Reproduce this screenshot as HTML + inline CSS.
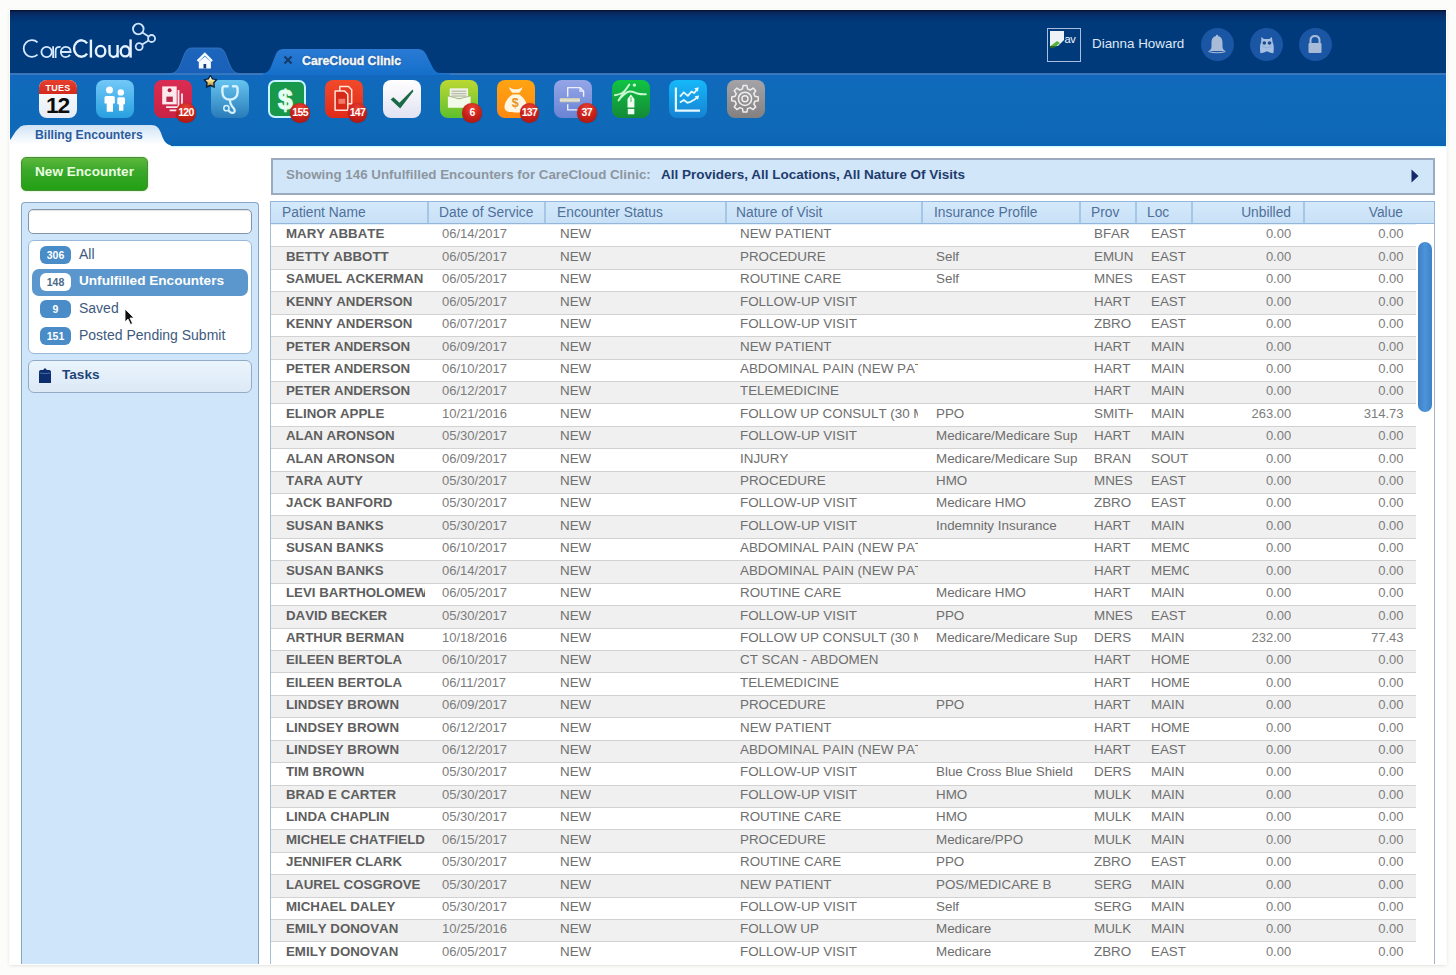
<!DOCTYPE html>
<html><head><meta charset="utf-8">
<style>
*{box-sizing:border-box}
html,body{margin:0;padding:0}
body{width:1456px;height:975px;position:relative;overflow:hidden;background:#fcfcfb;font-family:"Liberation Sans",sans-serif}
.abs{position:absolute}
#app{position:absolute;left:10px;top:10px;width:1436px;height:954px;background:#fff;box-shadow:0 0 0 1px rgba(255,255,255,.9),0 1px 4px rgba(0,0,0,.16)}
#navy{position:absolute;left:10px;top:10px;width:1436px;height:63px;background:linear-gradient(#040e28 0,#0a2458 2px,#03306e 6px,#013a7b 13px,#013a7b 100%)}
#hl{position:absolute;left:10px;top:72.5px;width:1436px;height:2px;background:linear-gradient(#2a62a8,#4a84c4 50%,#2a70b8)}
#band{position:absolute;left:10px;top:74.5px;width:1436px;height:71px;background:linear-gradient(#1268be 0,#0f6aba 20%,#0f69b8 80%,#0c64b4 100%)}
#glow{position:absolute;left:10px;top:145.5px;width:1436px;height:2.5px;background:linear-gradient(#c0f6ff,#ffffff)}
.ic{position:absolute;overflow:visible}
.bd{position:absolute;width:19.5px;height:19.5px;border-radius:50%;background:radial-gradient(circle at 50% 28%,#ea4434 0,#c8201a 50%,#a01410 100%);color:#fff;font-weight:bold;font-size:10.5px;line-height:19.5px;text-align:center;letter-spacing:-0.6px;box-shadow:0 0 1px rgba(0,0,0,.4)}
#logo{position:absolute;left:22px;top:30px;color:#eaf4ff;font-size:25px;letter-spacing:-1.2px;line-height:32px}
#logo b{font-weight:bold}
#user{position:absolute;left:1092px;top:35.2px;color:#dde8f5;font-size:13.4px;line-height:18px}
.circ{position:absolute;width:33px;height:33px;border-radius:50%;background:#1a56a4}
#avatar{position:absolute;left:1047px;top:28px;width:34px;height:34px;border:1.5px solid #a8bedc;background:#013a7b}
#btn{position:absolute;left:21px;top:157px;width:127px;height:34px;border-radius:5px;background:linear-gradient(#5cb83c 0,#3aa82a 40%,#22a014 100%);border:1px solid #4a8a3a;box-shadow:0 0 2px #a0f080;color:#eaffe0;font-weight:bold;font-size:13.6px;line-height:28px;text-align:center}
#lp{position:absolute;left:21px;top:202px;width:238px;height:762px;background:#cfe5f9;border:1.5px solid #86a6c6;border-bottom:none;border-radius:4px 4px 0 0}
#srch{position:absolute;left:27.5px;top:209px;width:224.5px;height:25px;background:#fff;border:1.6px solid #8494a6;border-radius:5px;box-shadow:inset 0 1px 1px rgba(0,0,0,.12)}
#lst{position:absolute;left:27.5px;top:240px;width:224.5px;height:113.5px;background:#fff;border:1.5px solid #9ab8d8;border-radius:6px}
#tasks{position:absolute;left:27.5px;top:360px;width:224.5px;height:32.5px;background:linear-gradient(#eaf4fc,#dce9f6);border:1.5px solid #92acc6;border-radius:6px}
.cnt{position:absolute;left:40px;width:31px;height:18px;border-radius:6px;background:#4a8cc8;color:#fff;font-size:10.5px;font-weight:bold;text-align:center;line-height:18px}
.lit{position:absolute;left:79px;color:#3d5a7e;font-size:14px;line-height:18px}
#sel{position:absolute;left:32px;top:269px;width:216px;height:27px;border-radius:7px;background:#5b97cc}
#filt{position:absolute;left:270.5px;top:157.5px;width:1164.5px;height:37px;background:#d2e6f9;border:2px solid #9aabbf}
#tbl{position:absolute;left:270px;top:201px;width:1165px;height:763px;background:#fff;border-left:1.5px solid #a6bed6;border-right:1.5px solid #a2b4c6}
#thd{position:absolute;left:270px;top:200.8px;width:1165px;height:23.2px;background:linear-gradient(#d4e9fb,#c8e0f6);border:1.5px solid #94b6da}
.th{position:absolute;top:203px;color:#50709a;font-size:13.8px;line-height:20px;white-space:nowrap}
.dv{position:absolute;top:202px;width:2px;height:21px;background:#a6c6e6}
.rw{position:absolute;left:271px;width:1144.5px;height:22.42px;border-top:1px solid #d2d2d2;background:#fff}
.rw.g{background:#f0f0f0}
.td{position:absolute;top:-0.6px;line-height:20px;white-space:nowrap;overflow:hidden}
.nm{font-weight:bold;color:#5e5e5e;font-size:13.3px;font-kerning:none}
.dt{color:#7c7c7c;font-size:13px}
.tx{color:#6e6e6e;font-size:13.4px;font-kerning:none}
.ra{text-align:right}
#thumb{position:absolute;left:1418.3px;top:242px;width:13.6px;height:170px;border-radius:7px;background:linear-gradient(90deg,#3c80c8,#4e94d8 50%,#3c82ca)}
</style></head><body>
<div id="app"></div>
<div id="navy"></div>
<div id="hl"></div>
<div id="band"></div>
<div id="glow"></div>
<!-- tabs -->
<svg class="abs" style="left:160px;top:44px" width="290" height="31" viewBox="0 0 290 31">
  <defs>
   <linearGradient id="tabh" x1="0" y1="0" x2="0" y2="1"><stop offset="0" stop-color="#1e66bc"/><stop offset="1" stop-color="#1860b8"/></linearGradient>
   <linearGradient id="tabc" x1="0" y1="0" x2="0" y2="1"><stop offset="0" stop-color="#2a7ad4"/><stop offset="1" stop-color="#1470ca"/></linearGradient>
  </defs>
  <path d="M10 29.6 C16.5 29.6 19 24.5 22 16.5 C25 8.5 26.5 4 31.5 4 H58.5 C63.5 4 65 8.5 68 16.5 C71 24.5 73.5 29.6 80 29.6 Z" fill="url(#tabh)" stroke="#3a78c4" stroke-width="0.8"/>
  <path d="M102.5 29.6 C107 29 109.5 26.5 111 22.5 L115.5 11 C117 7 119.5 5 124 5 H257 C262 5 264.5 7 266.5 11 L272.5 23 C274.5 27 277 29.2 283 29.6 H290 V31 H102.5 Z" fill="url(#tabc)"/>
</svg>
<svg class="abs" style="left:195px;top:51px" width="20" height="20" viewBox="0 0 20 20"><path d="M3.8 10.8 L9.8 5.6 L15.9 10.8 V17.4 H3.8 Z" fill="#f4faff"/><path d="M2.6 10.2 L9.8 2.9 L17 10.2" fill="none" stroke="#f4faff" stroke-width="2.4"/><rect x="8.5" y="13" width="2.7" height="4.4" fill="#163c72"/></svg>
<svg class="abs" style="left:283px;top:55px" width="10" height="10" viewBox="0 0 10 10"><path d="M1.5 1.5 L8.5 8.5 M8.5 1.5 L1.5 8.5" stroke="#163a6c" stroke-width="2.2"/></svg>
<div class="abs" style="left:302px;top:52.5px;color:#f0f8ff;font-size:12.3px;font-weight:bold;line-height:16px;letter-spacing:0px;-webkit-text-stroke:0.45px #f0f8ff;text-shadow:0 0 1.5px #0a2a5a,0 0 1px #0a2a5a">CareCloud Clinic</div>
<!-- billing tab -->
<svg class="abs" style="left:10px;top:124px" width="165" height="24" viewBox="0 0 165 24">
  <defs><linearGradient id="tabb" x1="0" y1="0" x2="0" y2="1"><stop offset="0" stop-color="#cfe2f6"/><stop offset="0.85" stop-color="#ffffff"/></linearGradient></defs>
  <path d="M0 24 V16 C3 12 6 6 9 4 C11 1.8 13 1 20 1 H141 C147 1 149 4 151 9 C153 15 155 20 161 21.5 V24 Z" fill="url(#tabb)"/>
</svg>
<div class="abs" style="left:35px;top:127px;color:#2c5c9c;font-size:12.2px;font-weight:bold;line-height:16px">Billing Encounters</div>
<!-- logo -->
<svg class="abs" style="left:0;top:0" width="170" height="70" viewBox="0 0 170 70">
  <g fill="none" stroke="#d6eaff" stroke-width="1.8" stroke-linecap="butt">
    <path d="M37.55 42.33 A8.3 8.3 0 1 0 37.55 54.67"/>
    <ellipse cx="46.6" cy="52" rx="5.2" ry="5.1"/><path d="M53.1 46.2 V58"/>
    <path d="M55.6 58 V50.8 C55.6 47.6 57.4 46.6 60.6 46.8"/>
    <path d="M60.8 52 H70.6 C70.6 48.8 68.5 46.9 65.7 46.9 C62.9 46.9 60.8 49.2 60.8 52 C60.8 54.8 62.9 57.1 65.7 57.1 C67.6 57.1 69.2 56.2 70 54.8"/>
  </g>
  <g fill="none" stroke="#e6f2ff" stroke-width="2.4" stroke-linecap="butt">
    <path d="M87.1 43.4 A7.3 8.2 0 1 0 87.1 53.6"/>
    <path d="M90.9 39.6 V57.6"/>
    <ellipse cx="100.6" cy="51.2" rx="4.7" ry="5.3"/>
    <path d="M109.5 45 V52.2 A4.05 4.8 0 0 0 117.6 52.2 M117.6 45 V57.6"/>
    <ellipse cx="125.2" cy="51.3" rx="4.5" ry="5.1"/><path d="M130.6 39.4 V57.6"/>
  </g>
  <g fill="none" stroke="#cfe4ff" stroke-width="1.8">
    <circle cx="138.3" cy="29" r="5.3"/><circle cx="151.6" cy="38.5" r="3.5"/><circle cx="139.2" cy="46.6" r="3.5"/>
    <path d="M142.4 32.4 L148.6 36.4 M148.6 40.6 L142.2 44.6"/>
  </g>
</svg>
<!-- user -->
<div id="avatar"><svg width="31" height="31" viewBox="0 0 31 31" style="position:absolute;left:0;top:0"><path d="M2 2 H16 V11 L10 17 H2 Z" fill="#eef2f6"/><path d="M2.5 17 L9 12 L12 14 L8 17.5 Z" fill="#58b040"/><path d="M2 17 H8 L6 19 H2 Z" fill="#2a6a28"/><text x="16.5" y="13.5" font-family="Liberation Sans" font-size="11" fill="#f4f8ff" letter-spacing="-0.3">av</text></svg></div>
<div id="user">Dianna Howard</div>
<div class="circ" style="left:1200.7px;top:28.2px"></div>
<div class="circ" style="left:1250.2px;top:28.2px"></div>
<div class="circ" style="left:1298.6px;top:28.2px"></div>
<svg class="abs" style="left:1207px;top:34px" width="20" height="22" viewBox="0 0 20 22"><path d="M10 2 C6 2 4.5 5 4.5 9 V13 C4.5 15 3 16 2 17 H18 C17 16 15.5 15 15.5 13 V9 C15.5 5 14 2 10 2 Z" fill="#a8bcd8"/><path d="M1.5 17.5 Q10 20 18.5 17.5" fill="none" stroke="#a8bcd8" stroke-width="1.2"/><circle cx="10" cy="2" r="1.2" fill="#a8bcd8"/></svg>
<svg class="abs" style="left:1257px;top:34px" width="20" height="22" viewBox="0 0 20 22"><path d="M4.4 2.9 L7 5 H12.4 L14.9 2.9 L15.6 8 C17 11 17 15 16.4 19.2 L12.8 18.6 L9.9 17.2 L7 18.6 L3.4 19.2 C2.8 15 2.8 11 4.2 8 Z" fill="#a6c0e4"/><circle cx="7.3" cy="9" r="1.8" fill="#1c4a8a"/><circle cx="12.5" cy="9" r="1.8" fill="#1c4a8a"/><path d="M5 12.5 Q9.9 15 14.8 12.5" fill="none" stroke="#88a8d4" stroke-width="0.8"/></svg>
<svg class="abs" style="left:1306px;top:34px" width="18" height="22" viewBox="0 0 18 22"><path d="M4.5 9 V6.5 C4.5 3.5 6.5 2 9 2 C11.5 2 13.5 3.5 13.5 6.5 V9" fill="none" stroke="#a8bcd8" stroke-width="2"/><rect x="2.5" y="9" width="13" height="10" rx="1" fill="#a8bcd8"/></svg>
<!-- icons -->
<svg class="ic" style="left:38.6px;top:79.7px" width="38" height="38" viewBox="0 0 38 38"><defs><linearGradient id="gcal" x1="0" y1="0" x2="0" y2="1"><stop offset="0" stop-color="#ffffff"/><stop offset="1" stop-color="#e6ecf6"/></linearGradient></defs><defs><linearGradient id="gcalr" x1="0" y1="0" x2="0" y2="1"><stop offset="0" stop-color="#e8402e"/><stop offset="1" stop-color="#d22a1c"/></linearGradient></defs><rect x="0" y="0" width="38" height="38" rx="8" fill="url(#gcal)"/><path d="M0 14 V8 A8 8 0 0 1 8 0 H30 A8 8 0 0 1 38 8 V14 Z" fill="url(#gcalr)"/><text x="19" y="11.1" text-anchor="middle" font-family="Liberation Sans" font-weight="bold" font-size="9" letter-spacing="0.3" fill="#fff">TUES</text><text x="18.6" y="33" text-anchor="middle" font-family="Liberation Sans" font-weight="bold" font-size="22.8" fill="#0c0c0c" letter-spacing="-1.2">12</text></svg>
<svg class="ic" style="left:96.2px;top:79.7px" width="38" height="38" viewBox="0 0 38 38"><defs><linearGradient id="gppl" x1="0" y1="0" x2="0" y2="1"><stop offset="0" stop-color="#72c8f8"/><stop offset="1" stop-color="#28a0e0"/></linearGradient></defs><rect x="0" y="0" width="38" height="38" rx="8" fill="url(#gppl)"/><circle cx="13.5" cy="9.9" r="3.5" fill="#fff"/><path d="M8.5 17.5 Q8.5 15.9 10.1 15.9 H17.2 Q18.8 15.9 18.8 17.5 V23.5 H17 V31.8 H10.7 V23.5 H8.5 Z" fill="#fff"/><circle cx="24.8" cy="12.4" r="3.2" fill="#fff"/><path d="M21.3 18.8 Q21.3 17.3 22.8 17.3 H27.5 Q29 17.3 29 18.8 V24.3 H27.4 V30.8 H22.9 V24.3 H21.3 Z" fill="#fff"/></svg>
<svg class="ic" style="left:153.5px;top:79.7px" width="38" height="38" viewBox="0 0 38 38"><defs><linearGradient id="gred1" x1="0" y1="0" x2="0" y2="1"><stop offset="0" stop-color="#da2c52"/><stop offset="1" stop-color="#c82244"/></linearGradient></defs><rect x="0" y="0" width="38" height="38" rx="8" fill="url(#gred1)"/><rect x="8.2" y="6.4" width="14.5" height="18" fill="#fde8ee"/><circle cx="15.6" cy="10.3" r="2" fill="#a82040"/><rect x="12.4" y="16.6" width="6.4" height="5.3" fill="#b82848"/><path d="M24.5 9.9 V27.2 H12.1" fill="none" stroke="#fde8ee" stroke-width="1.8"/><path d="M28 13.4 V30.4 H15.6" fill="none" stroke="#fde8ee" stroke-width="1.8"/></svg><div class="bd" style="left:176.25px;top:103.45px">120</div>
<svg class="ic" style="left:210.8px;top:79.7px" width="38" height="38" viewBox="0 0 38 38"><defs><linearGradient id="gst" x1="0" y1="0" x2="0" y2="1"><stop offset="0" stop-color="#66c4f0"/><stop offset="1" stop-color="#2a7cb8"/></linearGradient></defs><rect x="0" y="0" width="38" height="38" rx="8" fill="url(#gst)"/><path d="M16.6 6.2 H13.6 C12.2 6.2 11.4 7.2 11.4 8.8 V12 C11.4 16.6 14.6 19.6 18.9 19.6 C23.2 19.6 26.6 16.6 26.6 12 V8.8 C26.6 7.2 25.8 6.2 24.4 6.2 H22" fill="none" stroke="#d6f2ff" stroke-width="2.4" stroke-linecap="round"/><path d="M18.9 19.6 C19 22.5 19.6 24.5 21 26.2 C22.6 28.2 24.4 29.6 23.6 31.6 C22.8 33.6 19.6 33.4 18 30.8" fill="none" stroke="#d6f2ff" stroke-width="2.2" stroke-linecap="round"/><circle cx="15.4" cy="28.2" r="2.6" fill="none" stroke="#d6f2ff" stroke-width="1.5"/></svg>
<svg class="ic" style="left:267.6px;top:79.7px" width="38" height="38" viewBox="0 0 38 38"><rect x="1" y="1" width="36" height="36" rx="6" fill="#18984a" stroke="#c8f4ff" stroke-width="2"/><text x="17.4" y="29" text-anchor="middle" font-family="Liberation Sans" font-weight="bold" font-size="28.5" fill="#e6fff0" stroke="#e6fff0" stroke-width="1.1" transform="translate(17.4 0) scale(0.92 1) translate(-17.4 0)">$</text></svg><div class="bd" style="left:290.35px;top:103.45px">155</div>
<svg class="ic" style="left:325px;top:79.7px" width="38" height="38" viewBox="0 0 38 38"><defs><linearGradient id="gred2" x1="0" y1="0" x2="0" y2="1"><stop offset="0" stop-color="#f24a2a"/><stop offset="1" stop-color="#e02a18"/></linearGradient></defs><rect x="0" y="0" width="38" height="38" rx="8" fill="url(#gred2)"/><path d="M14.8 6.5 H23.5 L26.7 9.7 V23.8 H14.8 Z" fill="#e83820" stroke="#ffe4dc" stroke-width="1.5" stroke-linejoin="round"/><path d="M10.1 10.9 H19.4 L22.8 14.3 V30.3 H10.1 Z" fill="#d82818" stroke="#ffe4dc" stroke-width="1.5" stroke-linejoin="round"/><rect x="13.4" y="18.8" width="6.8" height="5" fill="#f07a68"/></svg><div class="bd" style="left:347.75px;top:103.45px">147</div>
<svg class="ic" style="left:382.7px;top:79.7px" width="38" height="38" viewBox="0 0 38 38"><defs><linearGradient id="gchk" x1="0" y1="0" x2="0" y2="1"><stop offset="0" stop-color="#ffffff"/><stop offset="1" stop-color="#e2e2f2"/></linearGradient></defs><rect x="0" y="0" width="38" height="38" rx="8" fill="url(#gchk)"/><path d="M7.6 19.6 L10.4 17.2 L16.4 22.8 L29.6 9.6 L30.4 11.2 L17.2 28.4 Z" fill="#1a6a48"/></svg>
<svg class="ic" style="left:439.7px;top:79.7px" width="38" height="38" viewBox="0 0 38 38"><defs><linearGradient id="gml" x1="0" y1="0" x2="0" y2="1"><stop offset="0" stop-color="#bcd832"/><stop offset="1" stop-color="#5ec02e"/></linearGradient></defs><rect x="0" y="0" width="38" height="38" rx="8" fill="url(#gml)"/><rect x="9.7" y="8.3" width="18.4" height="10" fill="#eef2e4"/><rect x="11.5" y="10.6" width="14.8" height="1.3" fill="#b8bca8"/><rect x="11.5" y="13" width="14.8" height="1.3" fill="#b8bca8"/><rect x="11.5" y="15.4" width="14.8" height="1.3" fill="#b8bca8"/><path d="M7.9 15.9 L19.2 18.9 L30.6 15.9 V27.8 H7.9 Z" fill="#f4fae8"/><path d="M7.9 15.9 L19.2 18.9 L30.6 15.9" fill="none" stroke="#9aa880" stroke-width="0.8"/></svg><div class="bd" style="left:462.45px;top:103.45px">6</div>
<svg class="ic" style="left:497px;top:79.7px" width="38" height="38" viewBox="0 0 38 38"><defs><linearGradient id="gmb" x1="0" y1="0" x2="0" y2="1"><stop offset="0" stop-color="#ffa412"/><stop offset="1" stop-color="#ff8810"/></linearGradient></defs><rect x="0" y="0" width="38" height="38" rx="8" fill="url(#gmb)"/><path d="M11.9 7 C14 8.4 16.5 9.5 18.8 9.3 C21 9.5 23.6 8.4 25.6 7 C25 9.5 23.5 11.5 22 12.7 H15.5 C14 11.5 12.5 9.5 11.9 7 Z" fill="#fff6e4"/><path d="M15.4 14.4 H22.2 C27 17.5 30.4 23 30.1 27.5 C29.8 31 26.5 32.5 18.8 32.5 C11 32.5 7.6 31 7.5 27.5 C7.3 23 10.6 17.5 15.4 14.4 Z" fill="#fff6e4"/><text x="18.2" y="26.6" text-anchor="middle" font-family="Liberation Sans" font-weight="bold" font-size="12.5" fill="#e8901a">$</text></svg><div class="bd" style="left:519.75px;top:103.45px">137</div>
<svg class="ic" style="left:554.3px;top:79.7px" width="38" height="38" viewBox="0 0 38 38"><defs><linearGradient id="gsc" x1="0" y1="0" x2="0" y2="1"><stop offset="0" stop-color="#94a6e6"/><stop offset="1" stop-color="#6a84d4"/></linearGradient></defs><rect x="0" y="0" width="38" height="38" rx="8" fill="url(#gsc)"/><path d="M13.7 16.8 V7.6 H26 L29.6 11.2 V16.8 M29.6 24.2 V29.9 H13.7 V24.2" fill="none" stroke="#eef0ff" stroke-width="1.4" stroke-linejoin="round"/><path d="M26 7.6 V11.2 H29.6" fill="none" stroke="#eef0ff" stroke-width="1.2"/><rect x="5.8" y="18" width="20.2" height="4.3" rx="1" fill="#cfcdb8"/><rect x="5.8" y="19.6" width="20.2" height="1" fill="#f0f0e8"/></svg><div class="bd" style="left:577.05px;top:103.45px">37</div>
<svg class="ic" style="left:612px;top:79.7px" width="38" height="38" viewBox="0 0 38 38"><defs><linearGradient id="ggs" x1="0" y1="0" x2="0" y2="1"><stop offset="0" stop-color="#10c444"/><stop offset="1" stop-color="#148a36"/></linearGradient></defs><rect x="0" y="0" width="38" height="38" rx="8" fill="url(#ggs)"/><path d="M2.9 15.2 C6 14.8 8.5 14 10.5 12.8 C13 11 15.5 7.5 17.3 4.6 C14 9 9.5 15.5 6.5 20.5 C10 16 13.5 12 17.5 11.5 C21 11.2 23.5 13 26.5 13.8 C29.5 14.5 32 14.3 33.9 14.2" fill="none" stroke="#c8f8d0" stroke-width="1.9" stroke-linecap="round" stroke-linejoin="round"/><circle cx="22.4" cy="5.1" r="1.7" fill="#c8f8d0"/><path d="M18.9 14.6 L22.4 19 V27.5 H15.5 V19 Z" fill="#effff0"/><rect x="15.8" y="28.9" width="6.5" height="5.4" fill="#effff0"/><rect x="18.6" y="17" width="0.8" height="5" fill="#18a83a"/></svg>
<svg class="ic" style="left:669.1px;top:79.7px" width="38" height="38" viewBox="0 0 38 38"><defs><linearGradient id="gch" x1="0" y1="0" x2="0" y2="1"><stop offset="0" stop-color="#16b8fa"/><stop offset="1" stop-color="#1682d2"/></linearGradient></defs><rect x="0" y="0" width="38" height="38" rx="8" fill="url(#gch)"/><path d="M6.9 7.6 V30.7 H31" fill="none" stroke="#e4f8ff" stroke-width="2.2"/><path d="M10.9 16.6 L14.8 12.3 L18.8 15.9 L22.5 11.6 L25.2 13 L28 9.5" fill="none" stroke="#e4f8ff" stroke-width="1.8" stroke-linejoin="round"/><path d="M10.9 22.4 L14.8 19.9 L18.4 22.8 L22 21.6 L25.5 19.5 L28.6 17" fill="none" stroke="#e4f8ff" stroke-width="1.8" stroke-linejoin="round"/><path d="M25.2 8.2 L29.8 7.2 L28.8 11.8 Z M25.6 16.2 L30.2 15.4 L29 19.8 Z" fill="#e4f8ff"/></svg>
<svg class="ic" style="left:726.5px;top:79.7px" width="38" height="38" viewBox="0 0 38 38"><defs><linearGradient id="ggr" x1="0" y1="0" x2="0" y2="1"><stop offset="0" stop-color="#a4a4a8"/><stop offset="1" stop-color="#848080"/></linearGradient></defs><rect x="0" y="0" width="38" height="38" rx="8" fill="url(#ggr)"/><path d="M15.46 8.92 L16.11 5.53 L19.89 5.53 L20.54 8.92 L23.19 10.02 L26.05 8.08 L28.72 10.75 L26.78 13.61 L27.88 16.26 L31.27 16.91 L31.27 20.69 L27.88 21.34 L26.78 23.99 L28.72 26.85 L26.05 29.52 L23.19 27.58 L20.54 28.68 L19.89 32.07 L16.11 32.07 L15.46 28.68 L12.81 27.58 L9.95 29.52 L7.28 26.85 L9.22 23.99 L8.12 21.34 L4.73 20.69 L4.73 16.91 L8.12 16.26 L9.22 13.61 L7.28 10.75 L9.95 8.08 L12.81 10.02 Z" fill="none" stroke="#eeeeee" stroke-width="1.5" stroke-linejoin="round"/><circle cx="18" cy="18.8" r="6.6" fill="none" stroke="#eeeeee" stroke-width="1.5"/><circle cx="18" cy="18.8" r="3" fill="none" stroke="#eeeeee" stroke-width="1.5"/></svg>
<svg class="abs" style="left:202px;top:73px" width="17" height="17" viewBox="0 0 17 17"><defs><linearGradient id="gstar" x1="0" y1="0" x2="0" y2="1"><stop offset="0" stop-color="#f0fff8"/><stop offset="0.45" stop-color="#f8e090"/><stop offset="1" stop-color="#b89030"/></linearGradient><filter id="fstar" x="-30%" y="-30%" width="160%" height="160%"><feGaussianBlur stdDeviation="0.6"/></filter></defs><path d="M8.40 2.00 L10.69 5.74 L14.96 6.77 L12.11 10.11 L12.46 14.48 L8.40 12.80 L4.34 14.48 L4.69 10.11 L1.84 6.77 L6.11 5.74 Z" fill="#081830" fill-opacity="0.85" stroke="#081830" stroke-width="0.8" stroke-linejoin="round" filter="url(#fstar)"/><path d="M8.40 3.60 L10.02 6.48 L13.25 7.12 L11.02 9.55 L11.40 12.83 L8.40 11.45 L5.40 12.83 L5.78 9.55 L3.55 7.12 L6.78 6.48 Z" fill="url(#gstar)"/></svg>
<!-- left panel -->
<div id="btn">New Encounter</div>
<div id="lp"></div>
<div id="srch"></div>
<div id="lst"></div>
<div id="sel"></div>
<div class="cnt" style="top:246px">306</div>
<div class="lit" style="top:245px">All</div>
<div class="cnt" style="top:273px;background:#fff;color:#4a6a8a">148</div>
<div class="lit" style="top:272px;color:#fff;font-weight:bold;font-size:13.6px">Unfulfilled Encounters</div>
<div class="cnt" style="top:300px">9</div>
<div class="lit" style="top:299px">Saved</div>
<div class="cnt" style="top:327px">151</div>
<div class="lit" style="top:326px">Posted Pending Submit</div>
<svg class="abs" style="left:124px;top:308px" width="12" height="18" viewBox="0 0 12 18"><path d="M1 1 V14 L4 11 L6.5 16.5 L8.5 15.5 L6 10 H10 Z" fill="#111" stroke="#fff" stroke-width="0.8"/></svg>
<div id="tasks"></div>
<svg class="abs" style="left:38px;top:367px" width="14" height="17" viewBox="0 0 14 17"><path d="M1 5 C1 3.5 2 3 3.5 3 H5 L7 1 L9 3 H10.5 C12 3 13 3.5 13 5 V16 H1 Z" fill="#0c2e6e"/><path d="M1.5 6 Q7 7.2 12.5 6" fill="none" stroke="#5a7ab0" stroke-width="0.8"/></svg>
<div class="abs" style="left:62px;top:367px;color:#1f4478;font-size:13.6px;font-weight:bold;line-height:16px">Tasks</div>
<!-- filter -->
<div id="filt"></div>
<div class="abs" style="left:286px;top:166px;color:#8c96a0;font-size:13.35px;font-weight:bold;line-height:18px;white-space:nowrap">Showing 146 Unfulfilled Encounters for CareCloud Clinic:</div>
<div class="abs" style="left:661px;top:166px;color:#1e3c6e;font-size:13.5px;font-weight:bold;line-height:18px;white-space:nowrap">All Providers, All Locations, All Nature Of Visits</div>
<svg class="abs" style="left:1411px;top:169px" width="8" height="14" viewBox="0 0 8 14"><path d="M0.5 0.5 L7.5 7 L0.5 13.5 Z" fill="#14286a"/></svg>
<!-- table -->
<div id="tbl"></div>
<div class="rw" style="top:224.00px;border-top-color:#e2f0fa"><div class="td nm" style="left:15px;width:139.3px">MARY ABBATE</div><div class="td dt" style="left:171px">06/14/2017</div><div class="td tx" style="left:289px">NEW</div><div class="td tx" style="left:469px;width:177.6px">NEW PATIENT</div><div class="td tx" style="left:823px;width:39.2px">BFAR</div><div class="td tx" style="left:880px;width:38px">EAST</div><div class="td dt ra" style="right:124.3px">0.00</div><div class="td dt ra" style="right:12px">0.00</div></div>
<div class="rw g" style="top:246.42px"><div class="td nm" style="left:15px;width:139.3px">BETTY ABBOTT</div><div class="td dt" style="left:171px">06/05/2017</div><div class="td tx" style="left:289px">NEW</div><div class="td tx" style="left:469px;width:177.6px">PROCEDURE</div><div class="td tx" style="left:665px;width:142px">Self</div><div class="td tx" style="left:823px;width:39.2px">EMUN</div><div class="td tx" style="left:880px;width:38px">EAST</div><div class="td dt ra" style="right:124.3px">0.00</div><div class="td dt ra" style="right:12px">0.00</div></div>
<div class="rw" style="top:268.84px"><div class="td nm" style="left:15px;width:139.3px">SAMUEL ACKERMAN</div><div class="td dt" style="left:171px">06/05/2017</div><div class="td tx" style="left:289px">NEW</div><div class="td tx" style="left:469px;width:177.6px">ROUTINE CARE</div><div class="td tx" style="left:665px;width:142px">Self</div><div class="td tx" style="left:823px;width:39.2px">MNES</div><div class="td tx" style="left:880px;width:38px">EAST</div><div class="td dt ra" style="right:124.3px">0.00</div><div class="td dt ra" style="right:12px">0.00</div></div>
<div class="rw g" style="top:291.26px"><div class="td nm" style="left:15px;width:139.3px">KENNY ANDERSON</div><div class="td dt" style="left:171px">06/05/2017</div><div class="td tx" style="left:289px">NEW</div><div class="td tx" style="left:469px;width:177.6px">FOLLOW-UP VISIT</div><div class="td tx" style="left:823px;width:39.2px">HART</div><div class="td tx" style="left:880px;width:38px">EAST</div><div class="td dt ra" style="right:124.3px">0.00</div><div class="td dt ra" style="right:12px">0.00</div></div>
<div class="rw" style="top:313.68px"><div class="td nm" style="left:15px;width:139.3px">KENNY ANDERSON</div><div class="td dt" style="left:171px">06/07/2017</div><div class="td tx" style="left:289px">NEW</div><div class="td tx" style="left:469px;width:177.6px">FOLLOW-UP VISIT</div><div class="td tx" style="left:823px;width:39.2px">ZBRO</div><div class="td tx" style="left:880px;width:38px">EAST</div><div class="td dt ra" style="right:124.3px">0.00</div><div class="td dt ra" style="right:12px">0.00</div></div>
<div class="rw g" style="top:336.10px"><div class="td nm" style="left:15px;width:139.3px">PETER ANDERSON</div><div class="td dt" style="left:171px">06/09/2017</div><div class="td tx" style="left:289px">NEW</div><div class="td tx" style="left:469px;width:177.6px">NEW PATIENT</div><div class="td tx" style="left:823px;width:39.2px">HART</div><div class="td tx" style="left:880px;width:38px">MAIN</div><div class="td dt ra" style="right:124.3px">0.00</div><div class="td dt ra" style="right:12px">0.00</div></div>
<div class="rw" style="top:358.52px"><div class="td nm" style="left:15px;width:139.3px">PETER ANDERSON</div><div class="td dt" style="left:171px">06/10/2017</div><div class="td tx" style="left:289px">NEW</div><div class="td tx" style="left:469px;width:177.6px">ABDOMINAL PAIN (NEW PATIENT)</div><div class="td tx" style="left:823px;width:39.2px">HART</div><div class="td tx" style="left:880px;width:38px">MAIN</div><div class="td dt ra" style="right:124.3px">0.00</div><div class="td dt ra" style="right:12px">0.00</div></div>
<div class="rw g" style="top:380.94px"><div class="td nm" style="left:15px;width:139.3px">PETER ANDERSON</div><div class="td dt" style="left:171px">06/12/2017</div><div class="td tx" style="left:289px">NEW</div><div class="td tx" style="left:469px;width:177.6px">TELEMEDICINE</div><div class="td tx" style="left:823px;width:39.2px">HART</div><div class="td tx" style="left:880px;width:38px">MAIN</div><div class="td dt ra" style="right:124.3px">0.00</div><div class="td dt ra" style="right:12px">0.00</div></div>
<div class="rw" style="top:403.36px"><div class="td nm" style="left:15px;width:139.3px">ELINOR APPLE</div><div class="td dt" style="left:171px">10/21/2016</div><div class="td tx" style="left:289px">NEW</div><div class="td tx" style="left:469px;width:177.6px">FOLLOW UP CONSULT (30 MIN)</div><div class="td tx" style="left:665px;width:142px">PPO</div><div class="td tx" style="left:823px;width:39.2px">SMITH</div><div class="td tx" style="left:880px;width:38px">MAIN</div><div class="td dt ra" style="right:124.3px">263.00</div><div class="td dt ra" style="right:12px">314.73</div></div>
<div class="rw g" style="top:425.78px"><div class="td nm" style="left:15px;width:139.3px">ALAN ARONSON</div><div class="td dt" style="left:171px">05/30/2017</div><div class="td tx" style="left:289px">NEW</div><div class="td tx" style="left:469px;width:177.6px">FOLLOW-UP VISIT</div><div class="td tx" style="left:665px;width:142px">Medicare/Medicare Sup</div><div class="td tx" style="left:823px;width:39.2px">HART</div><div class="td tx" style="left:880px;width:38px">MAIN</div><div class="td dt ra" style="right:124.3px">0.00</div><div class="td dt ra" style="right:12px">0.00</div></div>
<div class="rw" style="top:448.20px"><div class="td nm" style="left:15px;width:139.3px">ALAN ARONSON</div><div class="td dt" style="left:171px">06/09/2017</div><div class="td tx" style="left:289px">NEW</div><div class="td tx" style="left:469px;width:177.6px">INJURY</div><div class="td tx" style="left:665px;width:142px">Medicare/Medicare Sup</div><div class="td tx" style="left:823px;width:39.2px">BRAN</div><div class="td tx" style="left:880px;width:38px">SOUTH</div><div class="td dt ra" style="right:124.3px">0.00</div><div class="td dt ra" style="right:12px">0.00</div></div>
<div class="rw g" style="top:470.62px"><div class="td nm" style="left:15px;width:139.3px">TARA AUTY</div><div class="td dt" style="left:171px">05/30/2017</div><div class="td tx" style="left:289px">NEW</div><div class="td tx" style="left:469px;width:177.6px">PROCEDURE</div><div class="td tx" style="left:665px;width:142px">HMO</div><div class="td tx" style="left:823px;width:39.2px">MNES</div><div class="td tx" style="left:880px;width:38px">EAST</div><div class="td dt ra" style="right:124.3px">0.00</div><div class="td dt ra" style="right:12px">0.00</div></div>
<div class="rw" style="top:493.04px"><div class="td nm" style="left:15px;width:139.3px">JACK BANFORD</div><div class="td dt" style="left:171px">05/30/2017</div><div class="td tx" style="left:289px">NEW</div><div class="td tx" style="left:469px;width:177.6px">FOLLOW-UP VISIT</div><div class="td tx" style="left:665px;width:142px">Medicare HMO</div><div class="td tx" style="left:823px;width:39.2px">ZBRO</div><div class="td tx" style="left:880px;width:38px">EAST</div><div class="td dt ra" style="right:124.3px">0.00</div><div class="td dt ra" style="right:12px">0.00</div></div>
<div class="rw g" style="top:515.46px"><div class="td nm" style="left:15px;width:139.3px">SUSAN BANKS</div><div class="td dt" style="left:171px">05/30/2017</div><div class="td tx" style="left:289px">NEW</div><div class="td tx" style="left:469px;width:177.6px">FOLLOW-UP VISIT</div><div class="td tx" style="left:665px;width:142px">Indemnity Insurance</div><div class="td tx" style="left:823px;width:39.2px">HART</div><div class="td tx" style="left:880px;width:38px">MAIN</div><div class="td dt ra" style="right:124.3px">0.00</div><div class="td dt ra" style="right:12px">0.00</div></div>
<div class="rw" style="top:537.88px"><div class="td nm" style="left:15px;width:139.3px">SUSAN BANKS</div><div class="td dt" style="left:171px">06/10/2017</div><div class="td tx" style="left:289px">NEW</div><div class="td tx" style="left:469px;width:177.6px">ABDOMINAL PAIN (NEW PATIENT)</div><div class="td tx" style="left:823px;width:39.2px">HART</div><div class="td tx" style="left:880px;width:38px">MEMORIAL</div><div class="td dt ra" style="right:124.3px">0.00</div><div class="td dt ra" style="right:12px">0.00</div></div>
<div class="rw g" style="top:560.30px"><div class="td nm" style="left:15px;width:139.3px">SUSAN BANKS</div><div class="td dt" style="left:171px">06/14/2017</div><div class="td tx" style="left:289px">NEW</div><div class="td tx" style="left:469px;width:177.6px">ABDOMINAL PAIN (NEW PATIENT)</div><div class="td tx" style="left:823px;width:39.2px">HART</div><div class="td tx" style="left:880px;width:38px">MEMORIAL</div><div class="td dt ra" style="right:124.3px">0.00</div><div class="td dt ra" style="right:12px">0.00</div></div>
<div class="rw" style="top:582.72px"><div class="td nm" style="left:15px;width:139.3px">LEVI BARTHOLOMEW</div><div class="td dt" style="left:171px">06/05/2017</div><div class="td tx" style="left:289px">NEW</div><div class="td tx" style="left:469px;width:177.6px">ROUTINE CARE</div><div class="td tx" style="left:665px;width:142px">Medicare HMO</div><div class="td tx" style="left:823px;width:39.2px">HART</div><div class="td tx" style="left:880px;width:38px">MAIN</div><div class="td dt ra" style="right:124.3px">0.00</div><div class="td dt ra" style="right:12px">0.00</div></div>
<div class="rw g" style="top:605.14px"><div class="td nm" style="left:15px;width:139.3px">DAVID BECKER</div><div class="td dt" style="left:171px">05/30/2017</div><div class="td tx" style="left:289px">NEW</div><div class="td tx" style="left:469px;width:177.6px">FOLLOW-UP VISIT</div><div class="td tx" style="left:665px;width:142px">PPO</div><div class="td tx" style="left:823px;width:39.2px">MNES</div><div class="td tx" style="left:880px;width:38px">EAST</div><div class="td dt ra" style="right:124.3px">0.00</div><div class="td dt ra" style="right:12px">0.00</div></div>
<div class="rw" style="top:627.56px"><div class="td nm" style="left:15px;width:139.3px">ARTHUR BERMAN</div><div class="td dt" style="left:171px">10/18/2016</div><div class="td tx" style="left:289px">NEW</div><div class="td tx" style="left:469px;width:177.6px">FOLLOW UP CONSULT (30 MIN)</div><div class="td tx" style="left:665px;width:142px">Medicare/Medicare Sup</div><div class="td tx" style="left:823px;width:39.2px">DERS</div><div class="td tx" style="left:880px;width:38px">MAIN</div><div class="td dt ra" style="right:124.3px">232.00</div><div class="td dt ra" style="right:12px">77.43</div></div>
<div class="rw g" style="top:649.98px"><div class="td nm" style="left:15px;width:139.3px">EILEEN BERTOLA</div><div class="td dt" style="left:171px">06/10/2017</div><div class="td tx" style="left:289px">NEW</div><div class="td tx" style="left:469px;width:177.6px">CT SCAN - ABDOMEN</div><div class="td tx" style="left:823px;width:39.2px">HART</div><div class="td tx" style="left:880px;width:38px">HOME</div><div class="td dt ra" style="right:124.3px">0.00</div><div class="td dt ra" style="right:12px">0.00</div></div>
<div class="rw" style="top:672.40px"><div class="td nm" style="left:15px;width:139.3px">EILEEN BERTOLA</div><div class="td dt" style="left:171px">06/11/2017</div><div class="td tx" style="left:289px">NEW</div><div class="td tx" style="left:469px;width:177.6px">TELEMEDICINE</div><div class="td tx" style="left:823px;width:39.2px">HART</div><div class="td tx" style="left:880px;width:38px">HOME</div><div class="td dt ra" style="right:124.3px">0.00</div><div class="td dt ra" style="right:12px">0.00</div></div>
<div class="rw g" style="top:694.82px"><div class="td nm" style="left:15px;width:139.3px">LINDSEY BROWN</div><div class="td dt" style="left:171px">06/09/2017</div><div class="td tx" style="left:289px">NEW</div><div class="td tx" style="left:469px;width:177.6px">PROCEDURE</div><div class="td tx" style="left:665px;width:142px">PPO</div><div class="td tx" style="left:823px;width:39.2px">HART</div><div class="td tx" style="left:880px;width:38px">MAIN</div><div class="td dt ra" style="right:124.3px">0.00</div><div class="td dt ra" style="right:12px">0.00</div></div>
<div class="rw" style="top:717.24px"><div class="td nm" style="left:15px;width:139.3px">LINDSEY BROWN</div><div class="td dt" style="left:171px">06/12/2017</div><div class="td tx" style="left:289px">NEW</div><div class="td tx" style="left:469px;width:177.6px">NEW PATIENT</div><div class="td tx" style="left:823px;width:39.2px">HART</div><div class="td tx" style="left:880px;width:38px">HOME</div><div class="td dt ra" style="right:124.3px">0.00</div><div class="td dt ra" style="right:12px">0.00</div></div>
<div class="rw g" style="top:739.66px"><div class="td nm" style="left:15px;width:139.3px">LINDSEY BROWN</div><div class="td dt" style="left:171px">06/12/2017</div><div class="td tx" style="left:289px">NEW</div><div class="td tx" style="left:469px;width:177.6px">ABDOMINAL PAIN (NEW PATIENT)</div><div class="td tx" style="left:823px;width:39.2px">HART</div><div class="td tx" style="left:880px;width:38px">EAST</div><div class="td dt ra" style="right:124.3px">0.00</div><div class="td dt ra" style="right:12px">0.00</div></div>
<div class="rw" style="top:762.08px"><div class="td nm" style="left:15px;width:139.3px">TIM BROWN</div><div class="td dt" style="left:171px">05/30/2017</div><div class="td tx" style="left:289px">NEW</div><div class="td tx" style="left:469px;width:177.6px">FOLLOW-UP VISIT</div><div class="td tx" style="left:665px;width:142px">Blue Cross Blue Shield</div><div class="td tx" style="left:823px;width:39.2px">DERS</div><div class="td tx" style="left:880px;width:38px">MAIN</div><div class="td dt ra" style="right:124.3px">0.00</div><div class="td dt ra" style="right:12px">0.00</div></div>
<div class="rw g" style="top:784.50px"><div class="td nm" style="left:15px;width:139.3px">BRAD E CARTER</div><div class="td dt" style="left:171px">05/30/2017</div><div class="td tx" style="left:289px">NEW</div><div class="td tx" style="left:469px;width:177.6px">FOLLOW-UP VISIT</div><div class="td tx" style="left:665px;width:142px">HMO</div><div class="td tx" style="left:823px;width:39.2px">MULK</div><div class="td tx" style="left:880px;width:38px">MAIN</div><div class="td dt ra" style="right:124.3px">0.00</div><div class="td dt ra" style="right:12px">0.00</div></div>
<div class="rw" style="top:806.92px"><div class="td nm" style="left:15px;width:139.3px">LINDA CHAPLIN</div><div class="td dt" style="left:171px">05/30/2017</div><div class="td tx" style="left:289px">NEW</div><div class="td tx" style="left:469px;width:177.6px">ROUTINE CARE</div><div class="td tx" style="left:665px;width:142px">HMO</div><div class="td tx" style="left:823px;width:39.2px">MULK</div><div class="td tx" style="left:880px;width:38px">MAIN</div><div class="td dt ra" style="right:124.3px">0.00</div><div class="td dt ra" style="right:12px">0.00</div></div>
<div class="rw g" style="top:829.34px"><div class="td nm" style="left:15px;width:139.3px">MICHELE CHATFIELD</div><div class="td dt" style="left:171px">06/15/2017</div><div class="td tx" style="left:289px">NEW</div><div class="td tx" style="left:469px;width:177.6px">PROCEDURE</div><div class="td tx" style="left:665px;width:142px">Medicare/PPO</div><div class="td tx" style="left:823px;width:39.2px">MULK</div><div class="td tx" style="left:880px;width:38px">MAIN</div><div class="td dt ra" style="right:124.3px">0.00</div><div class="td dt ra" style="right:12px">0.00</div></div>
<div class="rw" style="top:851.76px"><div class="td nm" style="left:15px;width:139.3px">JENNIFER CLARK</div><div class="td dt" style="left:171px">05/30/2017</div><div class="td tx" style="left:289px">NEW</div><div class="td tx" style="left:469px;width:177.6px">ROUTINE CARE</div><div class="td tx" style="left:665px;width:142px">PPO</div><div class="td tx" style="left:823px;width:39.2px">ZBRO</div><div class="td tx" style="left:880px;width:38px">EAST</div><div class="td dt ra" style="right:124.3px">0.00</div><div class="td dt ra" style="right:12px">0.00</div></div>
<div class="rw g" style="top:874.18px"><div class="td nm" style="left:15px;width:139.3px">LAUREL COSGROVE</div><div class="td dt" style="left:171px">05/30/2017</div><div class="td tx" style="left:289px">NEW</div><div class="td tx" style="left:469px;width:177.6px">NEW PATIENT</div><div class="td tx" style="left:665px;width:142px">POS/MEDICARE B</div><div class="td tx" style="left:823px;width:39.2px">SERG</div><div class="td tx" style="left:880px;width:38px">MAIN</div><div class="td dt ra" style="right:124.3px">0.00</div><div class="td dt ra" style="right:12px">0.00</div></div>
<div class="rw" style="top:896.60px"><div class="td nm" style="left:15px;width:139.3px">MICHAEL DALEY</div><div class="td dt" style="left:171px">05/30/2017</div><div class="td tx" style="left:289px">NEW</div><div class="td tx" style="left:469px;width:177.6px">FOLLOW-UP VISIT</div><div class="td tx" style="left:665px;width:142px">Self</div><div class="td tx" style="left:823px;width:39.2px">SERG</div><div class="td tx" style="left:880px;width:38px">MAIN</div><div class="td dt ra" style="right:124.3px">0.00</div><div class="td dt ra" style="right:12px">0.00</div></div>
<div class="rw g" style="top:919.02px"><div class="td nm" style="left:15px;width:139.3px">EMILY DONOVAN</div><div class="td dt" style="left:171px">10/25/2016</div><div class="td tx" style="left:289px">NEW</div><div class="td tx" style="left:469px;width:177.6px">FOLLOW UP</div><div class="td tx" style="left:665px;width:142px">Medicare</div><div class="td tx" style="left:823px;width:39.2px">MULK</div><div class="td tx" style="left:880px;width:38px">MAIN</div><div class="td dt ra" style="right:124.3px">0.00</div><div class="td dt ra" style="right:12px">0.00</div></div>
<div class="rw" style="top:941.44px"><div class="td nm" style="left:15px;width:139.3px">EMILY DONOVAN</div><div class="td dt" style="left:171px">06/05/2017</div><div class="td tx" style="left:289px">NEW</div><div class="td tx" style="left:469px;width:177.6px">FOLLOW-UP VISIT</div><div class="td tx" style="left:665px;width:142px">Medicare</div><div class="td tx" style="left:823px;width:39.2px">ZBRO</div><div class="td tx" style="left:880px;width:38px">EAST</div><div class="td dt ra" style="right:124.3px">0.00</div><div class="td dt ra" style="right:12px">0.00</div></div>
<div id="thd"></div>
<div class="th" style="left:282px">Patient Name</div>
<div class="th" style="left:439px">Date of Service</div>
<div class="th" style="left:557px">Encounter Status</div>
<div class="th" style="left:736px">Nature of Visit</div>
<div class="th" style="left:934px">Insurance Profile</div>
<div class="th" style="left:1091px">Prov</div>
<div class="th" style="left:1147px">Loc</div>
<div class="th" style="right:165px">Unbilled</div>
<div class="th" style="right:53px">Value</div>
<div class="dv" style="left:426.5px"></div>
<div class="dv" style="left:544.2px"></div>
<div class="dv" style="left:724.5px"></div>
<div class="dv" style="left:921px"></div>
<div class="dv" style="left:1078.5px"></div>
<div class="dv" style="left:1134.5px"></div>
<div class="dv" style="left:1191.2px"></div>
<div class="dv" style="left:1303.4px"></div>
<div id="thumb"></div>
</body></html>
